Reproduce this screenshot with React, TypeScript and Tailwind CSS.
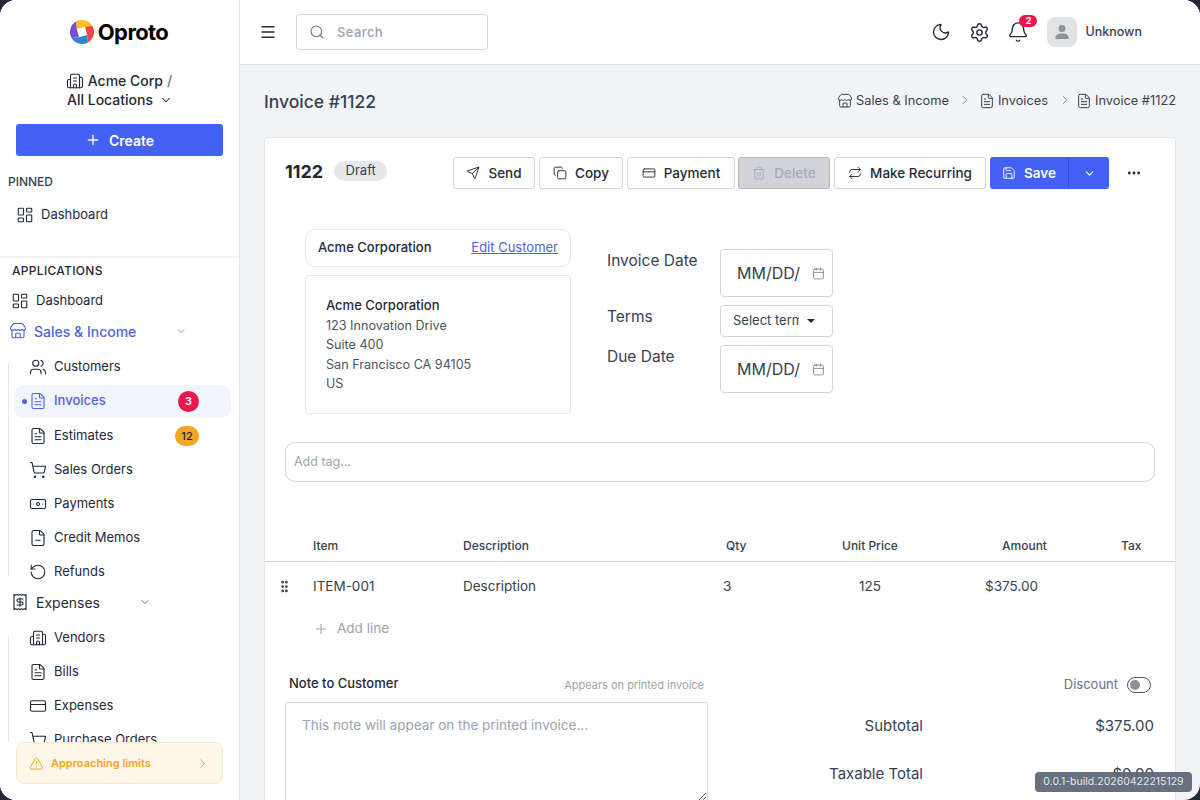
import {
  AlertTriangle,
  Bell,
  Building2,
  Calendar,
  ChevronDown,
  ChevronRight,
  Copy,
  CreditCard,
  FileMinus,
  FileText,
  GripVertical,
  LayoutDashboard,
  Menu,
  Moon,
  MoreHorizontal,
  Plus,
  Receipt,
  Repeat,
  RotateCcw,
  Save,
  Search,
  Send,
  Settings,
  ShoppingCart,
  Store,
  Trash2,
  Users,
  Banknote,
} from "lucide-react";

const font = { fontFamily: '"Inter", "Liberation Sans", sans-serif' };

const blade = "M-6 -10.4A12 12 0 0 1 10.4 -6L3 -5.2L-5.2 -3Z";

function Logo() {
  return (
    <svg width="24" height="24" viewBox="-12 -12 24 24" fill="none">
      <path d={blade} fill="#fbbf24" />
      <path d={blade} fill="#ef4444" transform="rotate(90)" />
      <path d={blade} fill="#2e86d1" transform="rotate(180)" />
      <path d={blade} fill="#7b4fc9" transform="rotate(270)" />
    </svg>
  );
}

function SideRow({
  icon: Icon,
  label,
  className,
}: {
  icon: typeof Users;
  label: string;
  className: string;
}) {
  return (
    <div className={`flex h-[34px] items-center text-[13px] text-[#1f2937] ${className}`}>
      <Icon size={18} strokeWidth={1.5} className="shrink-0" />
      <span className="ml-[7px] whitespace-nowrap">{label}</span>
    </div>
  );
}

function Sidebar() {
  return (
    <aside className="flex h-full w-[240px] shrink-0 flex-col border-r border-[#e5e7eb] bg-white">
      <div className="flex h-[64px] shrink-0 items-center justify-center gap-1 pr-[1px]">
        <Logo />
        <span className="text-[22px] font-bold tracking-[-0.6px] text-black">Oproto</span>
      </div>
      <div className="mt-[7px] flex flex-col items-center text-[14px] font-medium leading-[19px] text-[#1f2937]">
        <div className="flex items-center gap-[2px] pr-[1px]">
          <Building2 size={18} strokeWidth={1.5} />
          <span className="ml-[2px]">Acme Corp</span>
          <span className="ml-[2px] text-[#6b7280]">/</span>
        </div>
        <div className="flex items-center gap-1.5 pl-[1px]">
          <span>All Locations</span>
          <ChevronDown size={14} strokeWidth={1.8} />
        </div>
      </div>
      <div className="mx-4 mt-[15px] flex h-8 shrink-0 items-center justify-center gap-2 rounded-[3px] bg-[#4361f5] text-[14px] font-semibold text-white">
        <Plus size={16} strokeWidth={2} />
        <span>Create</span>
      </div>
      <div className="mt-[17px] pl-2 text-[12px] font-medium leading-[18px] text-[#374151]">PINNED</div>
      <SideRow icon={LayoutDashboard} label="Dashboard" className="mt-[7px] pl-[16px]" />
      <div className="mt-[24px] h-[2px] shrink-0 bg-[#f3f4f6]" />
      <div className="h-0 min-h-0 flex-1 overflow-hidden">
        <div className="mt-[4px] pl-3 text-[12px] font-medium leading-[18px] tracking-[0.3px] text-[#1f2937]">APPLICATIONS</div>
        <SideRow icon={LayoutDashboard} label="Dashboard" className="mt-[4px] pl-[11px]" />
        <div className="mb-[2px] mt-[-4px] flex h-[34px] items-center pl-[9px] text-[14px] font-medium text-[#4f63e0]">
          <Store size={18} strokeWidth={1.5} />
          <span className="ml-[7px]">Sales &amp; Income</span>
          <ChevronDown size={12} className="ml-[39px] text-[#8a97d8]" />
        </div>
        <div className="relative ml-2 mr-2 pl-[7px]">
          <div className="absolute bottom-[13px] left-0 top-[14px] w-px bg-[#e5e7eb]" />
          <SideRow icon={Users} label="Customers" className="pl-[14px]" />
          <div className="relative ml-[-1px] mt-px flex h-[33px] items-center rounded-[10px] bg-[#f3f5fe] pb-px pl-[15px] text-[13px] font-medium text-[#4f63e0]">
            <span className="absolute left-2 h-[5px] w-[5px] rounded-full bg-[#4f63e0]" />
            <FileText size={18} strokeWidth={1.5} />
            <span className="ml-[7px]">Invoices</span>
            <span className="absolute left-[164px] flex h-[21px] w-[21px] items-center justify-center rounded-full bg-[#e9184c] text-[11px] font-semibold text-white">3</span>
          </div>
          <div className="relative">
            <SideRow icon={FileText} label="Estimates" className="mt-[1px] pl-[14px]" />
            <span className="absolute left-[160px] top-[7px] flex h-[20px] w-[24px] items-center justify-center rounded-full bg-[#f5a524] text-[11px] font-medium text-[#1f2937]">12</span>
          </div>
          <SideRow icon={ShoppingCart} label="Sales Orders" className="pl-[14px]" />
          <SideRow icon={Banknote} label="Payments" className="pl-[14px]" />
          <SideRow icon={FileMinus} label="Credit Memos" className="pl-[14px]" />
          <SideRow icon={RotateCcw} label="Refunds" className="pl-[14px]" />
        </div>
        <div className="mb-[4px] mt-[-2px] flex h-[30px] items-center pl-[11px] text-[14px] text-[#1f2937]">
          <Receipt size={18} strokeWidth={1.5} />
          <span className="ml-[7px]">Expenses</span>
          <ChevronDown size={12} className="ml-[39px] text-[#6b7280]" />
        </div>
        <div className="relative ml-2 mr-2 pl-[7px]">
          <div className="absolute bottom-0 left-0 top-[14px] w-px bg-[#e5e7eb]" />
          <SideRow icon={Building2} label="Vendors" className="pl-[14px]" />
          <SideRow icon={FileText} label="Bills" className="pl-[14px]" />
          <SideRow icon={CreditCard} label="Expenses" className="pl-[14px]" />
          <SideRow icon={ShoppingCart} label="Purchase Orders" className="pl-[14px]" />
        </div>
      </div>
      <div className="shrink-0 px-4 pb-4">
        <div className="flex h-[42px] items-center rounded-[8px] border border-[#fde9cc] bg-[#fff6ea] pl-[12px] pr-[12px] pt-px text-[11px] font-semibold text-[#f5a524]">
          <AlertTriangle size={15} strokeWidth={1.6} />
          <span className="ml-[7px] flex-1">Approaching limits</span>
          <ChevronRight size={15} strokeWidth={1.6} />
        </div>
      </div>
    </aside>
  );
}

function Header() {
  return (
    <header className="flex h-[65px] shrink-0 items-center border-b border-[#e5e7eb] bg-white pl-[19px] pr-[58px]">
      <Menu size={18} strokeWidth={1.8} className="text-[#1f2937]" />
      <div className="ml-[19px] flex h-9 w-[192px] items-center rounded-[3px] border border-[#d1d5db] pl-[12px] text-[13px] font-medium tracking-[0.4px] text-[#9ca3af]">
        <Search size={16} strokeWidth={1.6} className="text-[#6b7280]" />
        <span className="ml-[12px] pt-px">Search</span>
      </div>
      <div className="ml-auto flex items-center">
        <Moon size={20} strokeWidth={1.6} className="text-[#1f2937]" />
        <Settings size={21} strokeWidth={1.6} className="ml-[18px] text-[#1f2937]" />
        <div className="relative ml-[17px]">
          <Bell size={22} strokeWidth={1.5} className="text-[#1f2937]" />
          <span className="absolute left-[12px] top-[-6px] flex h-3 w-[18px] items-center justify-center rounded-full bg-[#e9184c] text-[9px] font-bold text-white">2</span>
        </div>
        <div className="ml-[18px] flex h-[30px] w-[30px] items-center justify-center rounded-[8px] bg-[#e2e3e6]">
          <svg width="16" height="16" viewBox="0 0 16 16" fill="#8e9197">
            <circle cx="8" cy="4.5" r="3.5" />
            <path d="M1.5 15v-1.5C1.5 11 4 9.5 8 9.5s6.500 1.500 6.500 4V15Z" />
          </svg>
        </div>
        <span className="ml-2 text-[12.5px] font-medium text-[#374151]">Unknown</span>
      </div>
    </header>
  );
}

function ActionButton({ icon: Icon, label, className }: { icon: typeof Send; label: string; className: string }) {
  return (
    <div className={`flex h-8 items-center justify-center gap-2 rounded-[3px] border border-[#d1d5db] bg-white text-[13.5px] font-medium text-[#1f2937] ${className}`}>
      <Icon size={14} strokeWidth={1.6} />
      <span>{label}</span>
    </div>
  );
}

function DateField() {
  return (
    <div className="flex h-12 w-[113px] items-center rounded-[4px] border border-[#d1d5db] pl-4 text-[16px] text-[#374151]">
      <span>MM/DD/</span>
      <Calendar size={13} strokeWidth={1.4} className="ml-auto mr-[7px] text-[#6b7280]" />
    </div>
  );
}

function InvoiceCard() {
  return (
    <section className="mt-[22px] h-[700px] rounded-t-[4px] border border-[#e5e7eb] bg-white">
      <div className="flex h-[70px] items-start pl-5 pr-[33px] pt-[19px]">
        <span className="mt-[1px] text-[18px] font-bold leading-[28px] text-[#1f2937]">1122</span>
        <span className="ml-[11px] mt-[4px] flex h-5 w-[53px] items-center justify-center rounded-full bg-[#e5e7eb] text-[13px] text-[#374151]">Draft</span>
        <div className="ml-auto flex items-center gap-1">
          <ActionButton icon={Send} label="Send" className="w-[82px]" />
          <ActionButton icon={Copy} label="Copy" className="w-[84px]" />
          <ActionButton icon={CreditCard} label="Payment" className="w-[108px]" />
          <div className="ml-[-1px] flex h-8 w-[92px] items-center justify-center gap-2 rounded-[3px] border border-[#b6b8bd] bg-[#d1d3d8] text-[13.5px] font-medium text-[#a8abb2]">
            <Trash2 size={14} strokeWidth={1.6} />
            <span>Delete</span>
          </div>
          <ActionButton icon={Repeat} label="Make Recurring" className="w-[152px]" />
          <div className="flex h-8 w-[119px] overflow-hidden rounded-[3px] bg-[#4361f5] text-white">
            <div className="flex w-[79px] items-center justify-center gap-2 border-r border-[#3450d4] text-[13.5px] font-semibold">
              <Save size={14} strokeWidth={1.6} />
              <span>Save</span>
            </div>
            <div className="flex flex-1 items-center justify-center">
              <ChevronDown size={13} strokeWidth={2} />
            </div>
          </div>
          <MoreHorizontal size={16} strokeWidth={2.2} className="ml-[13px] text-[#1f2937]" />
        </div>
      </div>
      <div className="flex pl-10 pt-[21px]">
        <div className="w-[266px]">
          <div className="flex h-[38px] items-center justify-between rounded-[10px] border border-[#e5e7eb] px-3 text-[13px]">
            <span className="font-medium text-[#1f2937]">Acme Corporation</span>
            <span className="text-[#4f63e0] underline">Edit Customer</span>
          </div>
          <div className="mt-2 h-[139px] rounded-[4px] border border-[#e5e7eb] pl-5 pt-5 text-[12.6px] leading-[19.5px] text-[#4b5563]">
            <div className="text-[13px] font-medium text-[#1f2937]">Acme Corporation</div>
            <div>123 Innovation Drive</div>
            <div>Suite 400</div>
            <div>San Francisco CA 94105</div>
            <div>US</div>
          </div>
        </div>
        <div className="ml-9 grid h-fit grid-cols-[113px_113px] gap-y-2 pt-[20px] text-[15.5px] text-[#374151]">
          <span className="pt-px leading-[22px]">Invoice Date</span>
          <DateField />
          <span className="pt-px leading-[22px]">Terms</span>
          <div className="flex h-8 w-[113px] items-center rounded-[4px] border border-[#d1d5db] pl-3 text-[13px] text-[#374151]">
            <span className="w-[66px] overflow-hidden whitespace-nowrap">Select terms</span>
            <span className="ml-[8px] h-0 w-0 border-x-[4px] border-t-[4px] border-x-transparent border-t-[#1f2937]" />
          </div>
          <span className="pt-px leading-[22px]">Due Date</span>
          <DateField />
        </div>
      </div>
      <div className="mx-5 mt-7 flex h-10 items-center rounded-[10px] border border-[#d1d5db] pl-2 text-[12.5px] text-[#9ca3af]">Add tag...</div>
      <div className="mt-[52px] grid h-[28px] grid-cols-[48px_150px_263px_116px_160px_119px_1fr] items-start border-b border-[#d1d5db] pt-[3px] text-[12px] font-medium text-[#374151]">
        <span />
        <span>Item</span>
        <span>Description</span>
        <span>Qty</span>
        <span>Unit Price</span>
        <span>Amount</span>
        <span>Tax</span>
      </div>
      <div className="grid h-[49px] grid-cols-[48px_150px_260px_136px_126px_1fr] items-center text-[13.5px] text-[#374151]">
        <GripVertical size={15} strokeWidth={2.4} className="ml-[12px] text-[#374151]" />
        <span>ITEM-001</span>
        <span>Description</span>
        <span>3</span>
        <span>125</span>
        <span>$375.00</span>
      </div>
      <div className="flex h-[35px] items-center pl-[48px] text-[13.5px] text-[#9ca3af]">
        <Plus size={16} strokeWidth={1.5} />
        <span className="ml-[8px]">Add line</span>
      </div>
      <div className="flex pt-[29px]">
        <div className="ml-5 w-[423px]">
          <div className="flex h-[27px] items-start justify-between pl-1 pr-1">
            <span className="mt-[-1px] text-[13px] font-medium text-[#1f2937]">Note to Customer</span>
            <span className="mt-[2px] text-[11px] text-[#9ca3af]">Appears on printed invoice</span>
          </div>
          <textarea
            readOnly
            className="block h-[100px] w-[423px] rounded-[3px] border border-[#d1d5db] px-4 py-[12px] text-[13.5px] leading-[20px] outline-none placeholder:text-[#9ca3af]"
            placeholder="This note will appear on the printed invoice..."
          />
        </div>
        <div className="ml-[19px] flex-1 pr-[21px]">
          <div className="flex h-[19px] items-center justify-end gap-[9px] pr-[3px] text-[13px] text-[#6b7280]">
            <span>Discount</span>
            <span className="flex h-4 w-6 items-center rounded-full border border-[#4b5563] pl-[2px]">
              <span className="h-[10px] w-[10px] rounded-full bg-[#8e9197]" />
            </span>
          </div>
          <div className="mt-[21px] flex h-[22px] items-center text-[15px] text-[#374151]">
            <span className="w-[196px] text-right">Subtotal</span>
            <span className="ml-auto">$375.00</span>
          </div>
          <div className="mt-[26px] flex h-[22px] items-center text-[15px] text-[#374151]">
            <span className="w-[196px] text-right">Taxable Total</span>
            <span className="ml-auto">$0.00</span>
          </div>
          <div className="mt-[12px] flex h-[22px] items-center text-[15px] text-[#374151]">
            <span className="w-[196px] text-right">Estimated Tax</span>
            <span className="ml-auto">$0.00</span>
          </div>
        </div>
      </div>
    </section>
  );
}

export default function App() {
  return (
    <div className="h-[800px] w-[1200px] overflow-hidden bg-[#1f2937]" style={font}>
      <div className="relative flex h-full w-full overflow-hidden rounded-[16px] bg-[#f3f4f8]">
        <Sidebar />
        <div className="flex h-full min-w-0 flex-1 flex-col">
          <Header />
          <main className="min-h-0 flex-1 overflow-hidden pl-6 pr-6 pt-6">
            <div className="flex h-[26px] items-center justify-between">
              <h1 className="text-[17.5px] font-medium text-[#374151]">Invoice #1122</h1>
              <nav className="mt-[-2px] flex items-center text-[12.8px] text-[#374151]">
                <Store size={16} strokeWidth={1.5} />
                <span className="ml-[3px]">Sales &amp; Income</span>
                <ChevronRight size={14} strokeWidth={1.5} className="ml-[9px] mr-[7px] mt-[-2px] text-[#6b7280]" />
                <FileText size={16} strokeWidth={1.5} />
                <span className="ml-[3px]">Invoices</span>
                <ChevronRight size={14} strokeWidth={1.5} className="ml-[10px] mr-[4px] mt-[-2px] text-[#6b7280]" />
                <FileText size={16} strokeWidth={1.5} />
                <span className="ml-[3px]">Invoice #1122</span>
              </nav>
            </div>
            <InvoiceCard />
          </main>
        </div>
        <div className="absolute bottom-2 right-2 flex h-5 w-[157px] items-center justify-center rounded-[4px] bg-[#5f6877]/95 text-[10.5px] text-[#e5e7eb]">
          0.0.1-build.20260422215129
        </div>
      </div>
    </div>
  );
}
